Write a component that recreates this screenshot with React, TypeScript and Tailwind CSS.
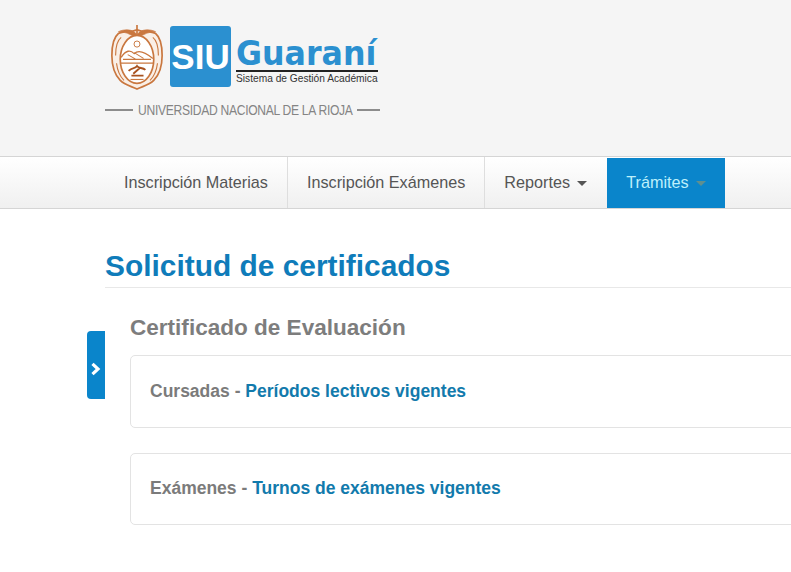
import React from 'react';

const Crest = () => (
  <svg width="54" height="67" viewBox="0 0 58 70" preserveAspectRatio="none" fill="none" stroke="#c9773f" className="shrink-0">
    {/* outer shield */}
    <path d="M29 7 C22 10 14 8 9 11 C4 15 2 24 2 34 C2 45 5 54 11 60 C16 65 23 66 29 69 C35 66 42 65 47 60 C53 54 56 45 56 34 C56 24 54 15 49 11 C44 8 36 10 29 7Z" strokeWidth="1.8" fill="#faefe6" />
    <path d="M6 34 C6 24 8 18 12 15 M52 34 C52 24 50 18 46 15 M7 42 C8 50 11 56 15 60 M51 42 C50 50 47 56 43 60" strokeWidth="1.2" />
    {/* eagle wings */}
    <path d="M29 12 C24 6 16 6 9 9 C16 9 22 12 27 15Z M29 12 C34 6 42 6 49 9 C42 9 36 12 31 15Z" fill="#c9773f" strokeWidth="0.6" />
    <path d="M29 2 L29 12" strokeWidth="1.8" />
    {/* inner oval */}
    <ellipse cx="29" cy="38" rx="18" ry="25" strokeWidth="1.8" fill="#fff" />
    <circle cx="29" cy="22" r="3.2" strokeWidth="1" />
    <path d="M12 36 C17 28 22 28 26 32 C30 28 36 29 46 37" strokeWidth="1.4" />
    <path d="M19 33 L28 38 M26 31 L36 37 M14 38 L44 38" strokeWidth="1.1" />
    <path d="M11 42 H47" strokeWidth="1.4" />
    {/* centre figure */}
    <path d="M20 50 C24 46 27 48 29 45 C31 48 35 46 38 49 M25 53 L32 47 M23 55 H36" stroke="#a8521f" strokeWidth="2" />
    <path d="M22 59 H36" strokeWidth="1.2" />
  </svg>
);

const SiuLogo = () => (
  <div className="ml-[5px] flex items-center font-['Liberation_Sans',sans-serif]">
    <Crest />
    <div className="ml-[6px] flex h-[61px] w-[61px] shrink-0 items-center justify-center rounded-[3px] bg-[#2b90d0] text-[35px] font-bold leading-none text-white">
      SIU
    </div>
    <div className="ml-[5px] mt-[8px] flex flex-col">
      <div className="origin-left scale-x-[0.96] whitespace-nowrap font-['DejaVu_Sans',sans-serif] text-[33px] font-bold leading-[33px] text-[#2b90d0]">
        Guaraní
      </div>
      <div className="w-[142px] border-t-2 border-[#222] text-[10.2px] leading-[13px] whitespace-nowrap text-[#333]">
        Sistema de Gestión Académica
      </div>
    </div>
  </div>
);

const NavItem: React.FC<{ label: string; caret?: boolean; last?: boolean }> = ({ label, caret, last }) => (
  <a className={`flex h-[51px] items-center gap-[7px] px-[19px] text-[#555] ${last ? '' : 'border-r border-[#dedede]'}`}>
    {label}
    {caret && <span className="mt-[1px] h-0 w-0 border-x-[5px] border-t-[5px] border-x-transparent border-t-[#555]" />}
  </a>
);

const LinkCard: React.FC<{ label: string; link: string; className?: string }> = ({ label, link, className }) => (
  <div className={`flex w-[700px] items-center rounded-[5px] border border-[#e3e3e3] bg-white pl-[19px] text-[17.5px] font-bold ${className ?? ''}`}>
    <span className="text-[#7b7b7b]">{label} -&nbsp;</span>
    <span className="text-[#127aac]">{link}</span>
  </div>
);

export default function App() {
  return (
    <div className="h-[572px] w-[791px] overflow-hidden bg-white font-['Liberation_Sans',Arial,sans-serif]">
      <header className="h-[156px] bg-[#f5f5f5] pl-[105px] pt-[23px]">
        <SiuLogo />
        <div className="mt-[11px] flex w-[275px] items-center gap-[5px] text-[14.2px] leading-[18px] text-[#848484]">
          <span className="h-[2px] w-[28px] bg-[#8c8c8c]" />
          <span className="w-[214px] origin-left scale-x-[0.853] whitespace-nowrap tracking-[-0.35px]">UNIVERSIDAD NACIONAL DE LA RIOJA</span>
          <span className="h-[2px] w-[23px] bg-[#8c8c8c]" />
        </div>
      </header>

      <nav className="flex h-[53px] border-y border-[#d5d5d5] bg-gradient-to-b from-white to-[#f0f0f0] pl-[105px] text-[16.2px]">
        <NavItem label="Inscripción Materias" />
        <NavItem label="Inscripción Exámenes" />
        <NavItem label="Reportes" caret last />
        <a className="ml-[1px] flex h-[50px] w-[118px] items-center justify-center gap-[7px] self-end bg-[#0a85cb] pb-[2px] text-[#bdf0fb]">
          Trámites
          <span className="mt-[2px] h-0 w-0 border-x-[5px] border-t-[5px] border-x-transparent border-t-[#5f8f8f]" />
        </a>
      </nav>

      <main className="pl-[105px] pt-[39px]">
        <h1 className="border-b border-[#e8e8e8] pb-[3px] text-[29.9px] font-bold leading-[36px] text-[#0f7cba]">
          Solicitud de certificados
        </h1>
        <div className="flex">
          <button className="-ml-[18px] mt-[43px] flex h-[68px] w-[18px] shrink-0 items-center justify-center rounded-l-[4px] bg-[#0a85cb] pt-[8px] pr-[1px] text-white">
            <svg width="11" height="14" viewBox="0 0 11 14" fill="none" stroke="white" strokeWidth="3.2" strokeLinejoin="miter">
              <path d="M2.5 1.8 L8 7 L2.5 12.2" />
            </svg>
          </button>
          <div className="pl-[25px] pt-[27px]">
            <h2 className="text-[22.55px] font-bold leading-[26px] text-[#7d7d7d]">Certificado de Evaluación</h2>
            <LinkCard className="mt-[14px] h-[73px] pb-[1px]" label="Cursadas" link="Períodos lectivos vigentes" />
            <LinkCard className="mt-[25px] h-[72px] pb-[2px]" label="Exámenes" link="Turnos de exámenes vigentes" />
          </div>
        </div>
      </main>
    </div>
  );
}
